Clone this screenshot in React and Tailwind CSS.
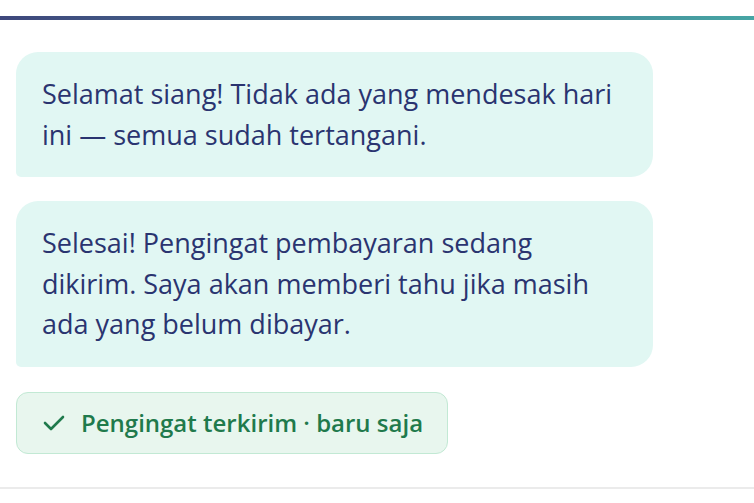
import React from "react";

const messages = [
  "Selamat siang! Tidak ada yang mendesak hari ini — semua sudah tertangani.",
  "Selesai! Pengingat pembayaran sedang dikirim. Saya akan memberi tahu jika masih ada yang belum dibayar.",
];

function CheckIcon() {
  return (
    <svg width="22" height="16" viewBox="0 0 22 16" fill="none" className="shrink-0">
      <polyline
        points="2,8 8,14 20,2"
        stroke="#1f7a4c"
        strokeWidth="2.6"
        strokeLinecap="round"
        strokeLinejoin="round"
      />
    </svg>
  );
}

export default function App() {
  return (
    <div
      className="w-[754px] h-[503px] bg-white overflow-hidden pt-4"
      style={{ fontFamily: '"Open Sans", "Noto Sans", sans-serif' }}
    >
      {/* top gradient bar */}
      <div className="h-1 w-full bg-gradient-to-r from-[#3e477c] to-[#46a5a4]" />

      <div className="px-4 pt-8">
        <div className="flex flex-col gap-6">
          {messages.map((text, i) => (
            <div
              key={i}
              className="w-[637px] bg-[#e1f7f3] text-[#2a3470] text-[27px] leading-[1.5] px-[26px] py-[22px] rounded-[22px] rounded-bl-[5px]"
            >
              {text}
            </div>
          ))}
        </div>

        {/* status badge */}
        <div className="mt-[25px] inline-flex items-center gap-4 bg-[#e8f6ee] border-[1.5px] border-[#c2e9d4] rounded-[12px] pl-[26px] pr-6 py-[12px]">
          <CheckIcon />
          <span className="text-[24px] leading-[1.5] font-semibold text-[#1f7a4c]">
            Pengingat terkirim · baru saja
          </span>
        </div>
      </div>

      {/* composer divider */}
      <div className="mt-[33px] border-t-2 border-[#ebebeb]" />
    </div>
  );
}
